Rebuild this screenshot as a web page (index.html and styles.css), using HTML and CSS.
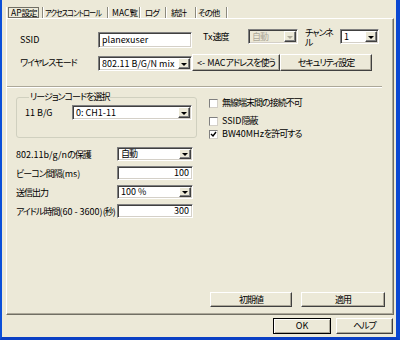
FILE: index.html
```html
<!DOCTYPE html>
<html lang="ja">
<head>
<meta charset="utf-8">
<link rel="stylesheet" href="styles.css">
</head>
<body>
<div class="window">
  <div class="tabs">
    <div class="tab t1"><span class="focus"><span class="lat">AP</span>設定</span></div>
    <div class="tab t2"><span class="squeeze">アクセスコントロール</span></div>
    <div class="tab t3"><span class="lat">MAC</span>覧</div>
    <div class="tab t4">ログ</div>
    <div class="tab t5">統計</div>
    <div class="tab t6">その他</div>
  </div>
  <div class="panel">
    <div class="row r1">
      <span class="lbl l-ssid lat">SSID</span>
      <div class="input i-ssid lat">planexuser</div>
      <span class="lbl l-tx"><span class="lat">Tx</span>速度</span>
      <div class="select disabled s-tx"><span class="val">自動</span><span class="drop"><i></i></span></div>
      <span class="lbl l-ch">チャンネ<br>ル</span>
      <div class="select s-ch"><span class="val lat">1</span><span class="drop"><i></i></span></div>
    </div>
    <div class="row r2">
      <span class="lbl l-mode">ワイヤレスモード</span>
      <div class="select s-mode"><span class="val lat">802.11 B/G/N mix</span><span class="drop"><i></i></span></div>
      <button class="btn b-mac"><span class="lat">&lt;- MAC</span>アドレスを使う</button>
      <button class="btn b-sec">セキュリティ設定</button>
    </div>
    <div class="sep"></div>
    <div class="mid">
      <fieldset class="group">
        <legend>リージョンコードを選択</legend>
        <div class="grow">
          <span class="lbl l-bg lat">11 B/G</span>
          <div class="select s-region"><span class="val lat">0: CH1-11</span><span class="drop"><i></i></span></div>
        </div>
      </fieldset>
      <div class="checks">
        <label class="chk c1"><span class="box"></span><span>無線端末間の接続不可</span></label>
        <label class="chk c2"><span class="box"></span><span><span class="lat">SSID</span>隠蔽</span></label>
        <label class="chk c3"><span class="box"><svg width="7" height="7" viewBox="0 0 7 7"><path d="M1 3 L3 5 L6 1" fill="none" stroke="#000" stroke-width="1.4"/></svg></span><span><span class="lat">BW40MHz</span>を許可する</span></label>
      </div>
    </div>
    <div class="frow f1">
      <span class="lbl l-f"><span class="lat">802.11b/g/n</span>の保護</span>
      <div class="select s-f"><span class="val">自動</span><span class="drop"><i></i></span></div>
    </div>
    <div class="frow">
      <span class="lbl l-f">ビーコン間隔<span class="lat">(ms)</span></span>
      <div class="input i-f num lat">100</div>
    </div>
    <div class="frow">
      <span class="lbl l-f">送信出力</span>
      <div class="select s-f"><span class="val lat">100 %</span><span class="drop"><i></i></span></div>
    </div>
    <div class="frow">
      <span class="lbl l-f">アイドル時間<span class="lat">(60 - 3600)</span>(秒)</span>
      <div class="input i-f num lat">300</div>
    </div>
    <div class="pbtns">
      <button class="btn b-def">初期値</button>
      <button class="btn b-apply">適用</button>
    </div>
  </div>
  <div class="footer">
    <button class="btn b-ok lat">OK</button>
    <button class="btn b-help">ヘルプ</button>
  </div>
</div>
</body>
</html>
```
FILE: styles.css
```css
* { box-sizing: border-box; }
html, body { margin: 0; padding: 0; }
body {
  width: 400px;
  height: 340px;
  overflow: hidden;
  font-family: "Noto Sans CJK JP", "Liberation Sans", sans-serif;
  font-size: 9px;
  color: #000;
  font-feature-settings: "palt";
  letter-spacing: -1px;
}
.lat { letter-spacing: 0; }
.window {
  width: 400px;
  height: 340px;
  background: #ECE9D8;
  border-left: 2px solid #0B4FD9;
  border-right: 4px solid #0A47D2;
  border-bottom: 3px solid #0A3FC4;
  padding-left: 4px;
  display: flex;
  flex-direction: column;
}
.tabs {
  display: flex;
  height: 18px;
  align-items: flex-end;
}
.tab {
  height: 11px;
  line-height: 11px;
  padding-left: 3px;
  border-right: 1px solid #8C8A7E;
  box-shadow: 1px 0 0 #fff;
  white-space: nowrap;
  font-size: 8.5px;
  letter-spacing: -1.1px;
}
.t1 { width: 37px; padding-left: 1px; border-left: 1px solid #fff; }
.t2 { width: 65px; padding-left: 2px; }
.t3 { width: 32px; padding-left: 4px; }
.t4 { width: 26px; padding-left: 5px; }
.t5 { width: 30px; padding-left: 5px; }
.t6 { width: 31px; padding-left: 2px; }
.squeeze {
  display: inline-block;
  transform: scaleX(0.84);
  transform-origin: left center;
}
.focus {
  display: inline-block;
  border: 1px solid #716F64;
  padding: 0 2px;
  line-height: 9px;
  height: 11px;
}
.panel {
  width: 388px;
  height: 297px;
  border-top: 1px solid #fff;
  border-left: 1px solid #fff;
  border-right: 1px solid #716F64;
  border-bottom: 1px solid #716F64;
  box-shadow: inset -1px -1px 0 #ACA899;
  padding-top: 10px;
  display: flex;
  flex-direction: column;
}
.row { display: flex; align-items: flex-start; padding-left: 13px; }
.r1 { height: 20px; }
.r2 { height: 17px; margin-top: 5px; }
.lbl { white-space: nowrap; }
.l-ssid { width: 78px; margin-top: 3px; line-height: 16px; }
.i-ssid { width: 94px; height: 16px; margin-top: 3px; }
.l-tx { width: 45px; margin-left: 11px; line-height: 15px; }
.s-tx { width: 50px; height: 15px; }
.l-ch { width: 35px; margin-left: 7px; line-height: 10px; margin-top: -1px; }
.s-ch { width: 39px; height: 15px; }
.l-mode { width: 78px; line-height: 17px; }
.s-mode { width: 94px; height: 15px; margin-top: 2px; }
.b-mac { width: 88px; height: 17px; margin-left: 7px; }
.b-sec { width: 92px; height: 17px; margin-left: 3px; }

.input, .select {
  background: #fff;
  border: 1px solid;
  border-color: #808080 #fff #fff #808080;
  box-shadow: inset 1px 1px 0 #404040, inset -1px -1px 0 #D4D0C8;
  white-space: nowrap;
  overflow: hidden;
}
.input { padding: 0 3px; line-height: 12px; }
.input.i-ssid { line-height: 14px; }
.num { text-align: right; }
.select { display: flex; align-items: stretch; padding: 0; }
.select .val { flex: 1; padding-left: 3px; line-height: 13px; }
.s-f .val { line-height: 12px; }
.select .drop {
  width: 12px;
  margin: 1px;
  background: #ECE9D8;
  border: 1px solid;
  border-color: #fff #404040 #404040 #fff;
  box-shadow: inset -1px -1px 0 #808080;
  display: flex;
  align-items: center;
  justify-content: center;
}
.select .drop i {
  width: 0;
  height: 0;
  border-left: 3px solid transparent;
  border-right: 3px solid transparent;
  border-top: 3px solid #000;
  margin-top: 1px;
}
.select.disabled { background: #ECE9D8; }
.select.disabled .val { color: #ACA899; }
.select.disabled .drop i { border-top-color: #ACA899; }

.btn {
  font: inherit;
  letter-spacing: -1px;
  color: #000;
  background: #ECE9D8;
  border: 1px solid;
  border-color: #fff #404040 #404040 #fff;
  box-shadow: inset -1px -1px 0 #ACA899;
  padding: 0;
  margin: 0;
  line-height: 12px;
  text-align: center;
  white-space: nowrap;
}
.btn.lat { letter-spacing: 0; }
.sep {
  width: 375px;
  height: 2px;
  margin-top: 15px;
  border-top: 1px solid #ACA899;
  border-bottom: 1px solid #fff;
}
.mid { display: flex; margin-top: 4px; padding-left: 9px; height: 46px; }
.group {
  margin: 0;
  padding: 0 4px 16px 8px;
  border: 1px solid #D0D0BF;
  border-radius: 3px;
  width: 181px;
  min-width: 0;
}
.group legend {
  padding: 0 1px;
  margin-left: 4px;
  line-height: 10px;
  height: 10px;
}
.grow { display: flex; margin-top: 3px; height: 15px; }
.l-bg { width: 47px; line-height: 15px; }
.s-region { width: 120px; height: 15px; }
.checks { margin-left: 12px; display: flex; flex-direction: column; }
.chk { display: flex; align-items: center; height: 10px; line-height: 10px; gap: 4px; white-space: nowrap; }
.c1 { margin-top: 6px; }
.c2 { margin-top: 8px; }
.c3 { margin-top: 3px; }
.box {
  width: 9px;
  height: 9px;
  background: #fff;
  border: 1px solid;
  border-color: #808080 #D4D0C8 #D4D0C8 #808080;
  display: flex;
  align-items: center;
  justify-content: center;
}
.box svg { display: block; }
.frow { display: flex; align-items: center; height: 14px; margin-top: 5px; padding-left: 9px; }
.f1 { margin-top: 9px; }
.l-f { width: 101px; }
.s-f, .i-f { width: 76px; height: 14px; }
.pbtns {
  margin-top: auto;
  display: flex;
  justify-content: flex-end;
  gap: 9px;
  padding-right: 8px;
  padding-bottom: 7px;
}
.b-def { width: 82px; height: 15px; }
.b-apply { width: 84px; height: 15px; }
.footer {
  display: flex;
  justify-content: flex-end;
  gap: 5px;
  margin-top: 3px;
  padding-right: 3px;
}
.b-ok { width: 58px; height: 16px; border: 1px solid #000; box-shadow: inset 1px 1px 0 #fff, inset -1px -1px 0 #ACA899; }
.b-help { width: 57px; height: 16px; }
```
